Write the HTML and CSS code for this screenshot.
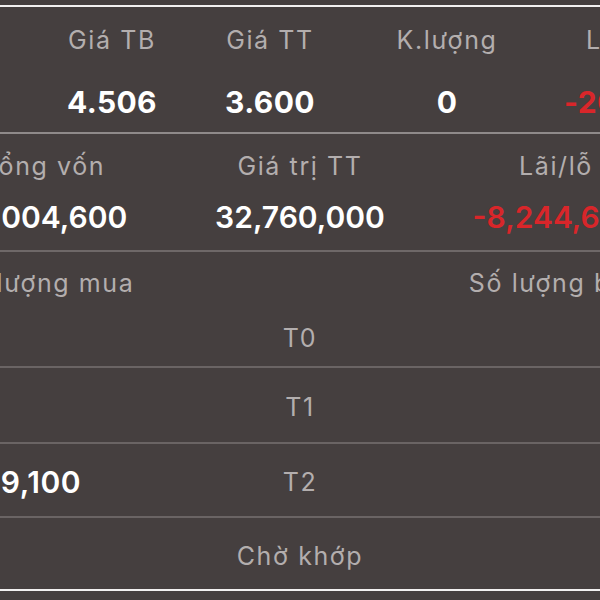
FILE: index.html
```html
<!DOCTYPE html>
<html lang="vi">
<head>
<meta charset="utf-8">
<link rel="stylesheet" href="styles.css">
</head>
<body>
<div class="page">
  <section class="summary">
    <div class="row4 labels">
      <div class="c1">Giá TB</div>
      <div class="c2">Giá TT</div>
      <div class="c3">K.lượng</div>
      <div class="c4">Lãi/lỗ</div>
    </div>
    <div class="row4 values">
      <div class="c1">4.506</div>
      <div class="c2">3.600</div>
      <div class="c3">0</div>
      <div class="c4 neg">-20.11%</div>
    </div>
  </section>
  <section class="totals">
    <div class="row3 labels">
      <div>Tổng vốn</div>
      <div>Giá trị TT</div>
      <div>Lãi/lỗ</div>
    </div>
    <div class="row3 values semi">
      <div>41,004,600</div>
      <div>32,760,000</div>
      <div class="neg">-8,244,600</div>
    </div>
  </section>
  <section class="settle">
    <div class="row3 labels head">
      <div>Số lượng mua</div>
      <div></div>
      <div>Số lượng bán</div>
    </div>
    <div class="row3 line t0">
      <div class="val"></div>
      <div class="mid">T0</div>
      <div class="val"></div>
    </div>
    <div class="row3 line t1">
      <div class="val"></div>
      <div class="mid">T1</div>
      <div class="val"></div>
    </div>
    <div class="row3 line t2">
      <div class="val">9,100</div>
      <div class="mid">T2</div>
      <div class="val"></div>
    </div>
    <div class="row3 line wait">
      <div class="val"></div>
      <div class="mid">Chờ khớp</div>
      <div class="val"></div>
    </div>
  </section>
</div>
</body>
</html>
```
FILE: styles.css
```css
html, body {
  margin: 0;
  padding: 0;
  background: #453f3f;
  overflow: hidden;
  width: 600px;
  height: 600px;
}
body {
  font-family: Inter, "Noto Sans", sans-serif;
  color: #b0abab;
}
.page {
  padding-top: 5px;
}
.summary {
  border-top: 2px solid #f2f0f0;
  border-bottom: 2px solid #8f8a8a;
  height: 125px;
  display: flex;
  flex-direction: column;
}
.row4 {
  display: grid;
  grid-template-columns: 160px 156px 198px 154px;
  margin-left: 32px;
  width: 668px;
  text-align: center;
  white-space: nowrap;
}
.labels {
  font-size: 25px;
  font-weight: 400;
  color: #b3aeae;
  letter-spacing: 1.6px;
}
.values {
  font-size: 30px;
  font-weight: 700;
  color: #ffffff;
  letter-spacing: 0.4px;
}
.values.semi {
  font-weight: 600;
  letter-spacing: 0;
}
.neg {
  color: #d8262a;
}
.summary .labels {
  padding-top: 17px;
  height: 33px;
  line-height: 33px;
}
.summary .values {
  padding-top: 26px;
  line-height: 38px;
}
.totals {
  height: 116px;
  border-bottom: 2px solid #6e6868;
}
.row3 {
  display: grid;
  grid-template-columns: 256px 256px 256px;
  margin-left: -84px;
  width: 768px;
  text-align: center;
  white-space: nowrap;
}
.totals .labels {
  padding-top: 16px;
  line-height: 33px;
}
.totals .values {
  padding-top: 15px;
  line-height: 38px;
}
.settle .head {
  height: 54px;
  line-height: 33px;
  padding-top: 15px;
  box-sizing: border-box;
}
.line {
  align-items: center;
  border-bottom: 2px solid #6a6464;
}
.t0 { height: 60px; }
.t1 { height: 74px; }
.t2 { height: 72px; }
.wait { height: 71px; border-bottom-color: #f2f0f0; }
.mid {
  font-size: 25px;
  color: #b3aeae;
  letter-spacing: 1.6px;
  padding-top: 4px;
}
.val {
  font-size: 30px;
  font-weight: 600;
  color: #ffffff;
  letter-spacing: 0.6px;
  padding-top: 4px;
  padding-right: 6px;
}
```
